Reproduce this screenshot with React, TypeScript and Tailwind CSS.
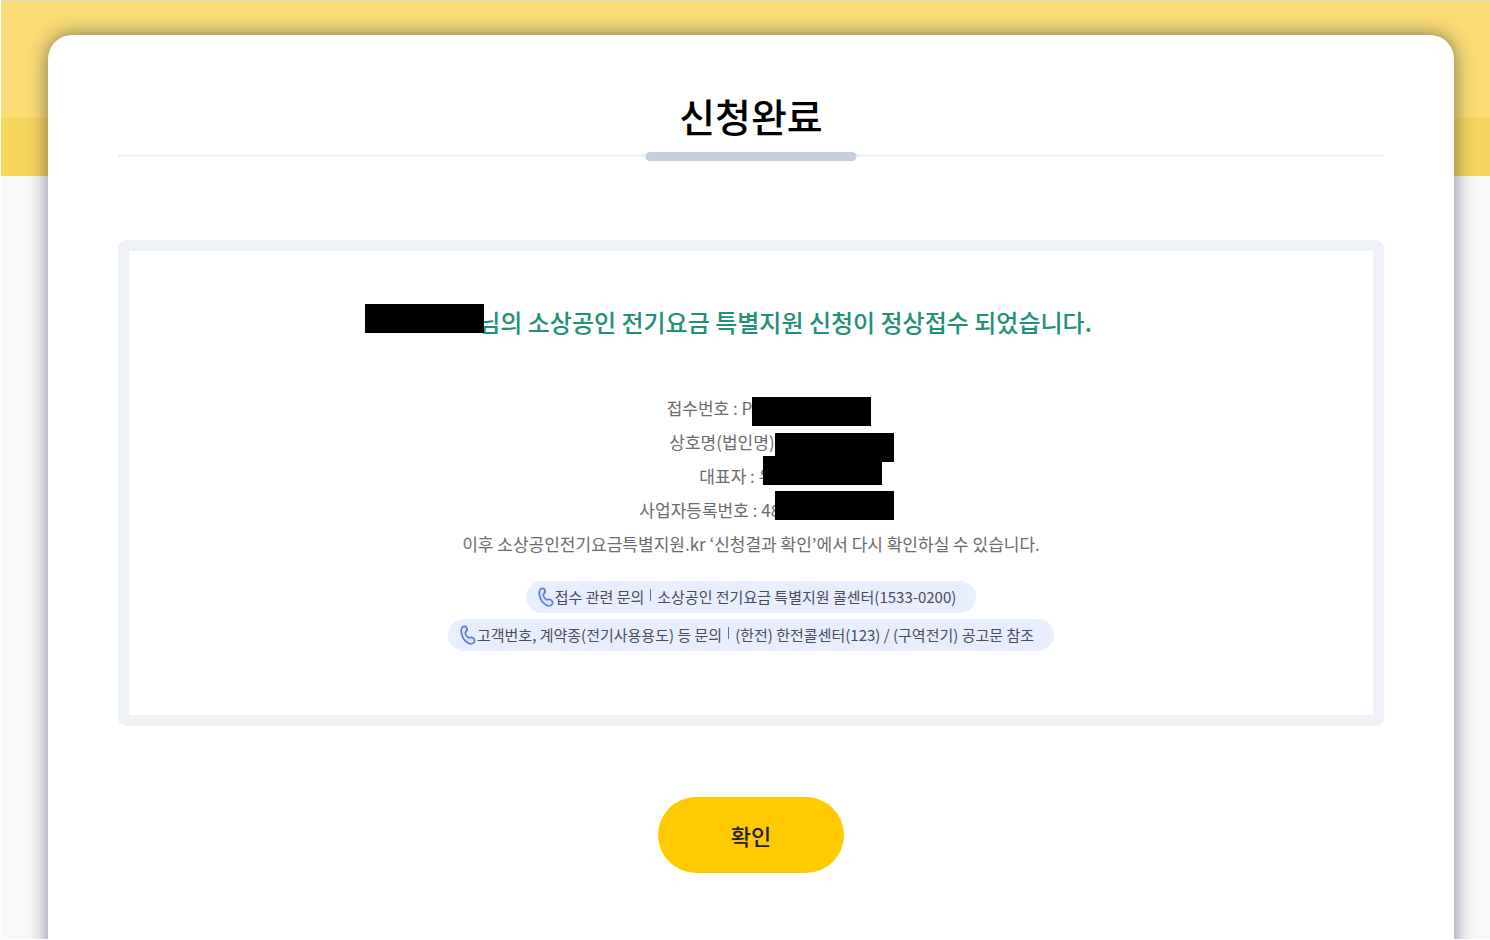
import type { ReactNode } from 'react';

function PhoneIcon() {
  return (
    <svg viewBox="0 0 16 20" className="w-4 h-5 shrink-0" fill="#dbe5fb" stroke="#5b7fc7" strokeWidth="1.7" strokeLinejoin="round" aria-hidden="true">
      <path d="M1.6 3.4 C2.2 1.2 5.2 0.7 6.4 2.2 C7.4 3.6 7.3 5.4 6.1 6.5 C5.1 7.4 5.1 8.3 5.7 9.5 C6.4 11 7.3 12.3 8.5 12.6 C9.7 12.9 10.6 12 12 12.5 C13.8 13.1 15.2 15 14.4 16.8 C13.4 18.8 10.8 19.2 8.6 18.2 C5 16.5 2.3 12.4 1.5 8.4 C1.1 6.5 1.1 4.9 1.6 3.4 Z" />
    </svg>
  );
}

function Mask({ className }: { className: string }) {
  return <span className={`absolute w-[119px] h-[29px] bg-black ${className}`}></span>;
}

function Notice({ title, children }: { title: string; children: ReactNode }) {
  return (
    <p className="flex items-center h-8 px-3 pr-5 rounded-full bg-[#e8eefd] text-[15px] text-[#4b4b5c] whitespace-nowrap">
      <PhoneIcon />
      <span className="ml-px">{title}</span>
      <span className="w-px h-3 mx-1.5 mb-1 bg-[#4f74c4]"></span>
      <span>{children}</span>
    </p>
  );
}

export default function App() {
  return (
    <div className="min-h-screen flex overflow-hidden border-l border-b border-t border-l-white border-b-white border-t-[#dfe0dc] pl-[47px] pr-9 pt-[34px] font-['Noto_Sans_CJK_KR',sans-serif] bg-[linear-gradient(#fadd75_117px,#f5d55c_117px,#f5d55c_175px,#f8f8f8_175px)]">
      <main className="flex-1 px-[70px] pt-[52px] pb-20 -mb-6 rounded-t-3xl bg-white shadow-[0_0_20px_rgba(0,0,60,0.5)]">
        <header className="relative border-b-3 border-[#f1f2f6] pb-[11px]">
          <h1 className="text-[39px] leading-[56px] font-medium text-center text-black">신청완료</h1>
          <span className="absolute left-1/2 -translate-x-1/2 -bottom-[7px] w-[211px] h-[9px] rounded-full bg-[#c6cedb]"></span>
        </header>

        <section className="mt-[83px] pt-[53px] pb-16 flex flex-col items-center rounded-lg border-11 border-[#eef2f7]">
          <h2 className="text-2xl leading-9 font-medium text-[#219078] whitespace-nowrap">
            <span className="relative inline-block w-[68px]">
              <Mask className="-right-[6px] -top-[28px]" />
            </span>
            님의 소상공인 전기요금 특별지원 신청이 정상접수 되었습니다.
          </h2>

          <div className="mt-[51px] flex flex-col items-center text-[17px] leading-[34px] text-[#6b6b6b] whitespace-nowrap">
            <p className="flex">
              접수번호 : P
              <span className="relative w-[83px]"><Mask className="left-0 top-[6px]" /></span>
            </p>
            <p className="flex">
              상호명(법인명)
              <span className="relative w-[58px]"><Mask className="left-0 top-[8px]" /></span>
            </p>
            <p className="flex">
              대표자 :&nbsp;
              <span className="relative w-11">유<Mask className="left-1 -top-[3px]" /></span>
            </p>
            <p className="flex">
              사업자등록번호 : 4
              <span className="relative w-[92px]">8<Mask className="left-1 -top-[2px]" /></span>
            </p>
            <p>이후 소상공인전기요금특별지원.kr ‘신청결과 확인’에서 다시 확인하실 수 있습니다.</p>
          </div>

          <div className="mt-5 flex flex-col items-center gap-1.5">
            <Notice title="접수 관련 문의">소상공인 전기요금 특별지원 콜센터(1533-0200)</Notice>
            <Notice title="고객번호, 계약종(전기사용용도) 등 문의">(한전) 한전콜센터(123) / (구역전기) 공고문 참조</Notice>
          </div>
        </section>

        <div className="mt-[71px] flex justify-center">
          <button type="button" className="w-[186px] h-[76px] rounded-full bg-[#ffcb00] text-[22px] font-medium text-[#222] cursor-pointer">
            확인
          </button>
        </div>
      </main>
    </div>
  );
}
